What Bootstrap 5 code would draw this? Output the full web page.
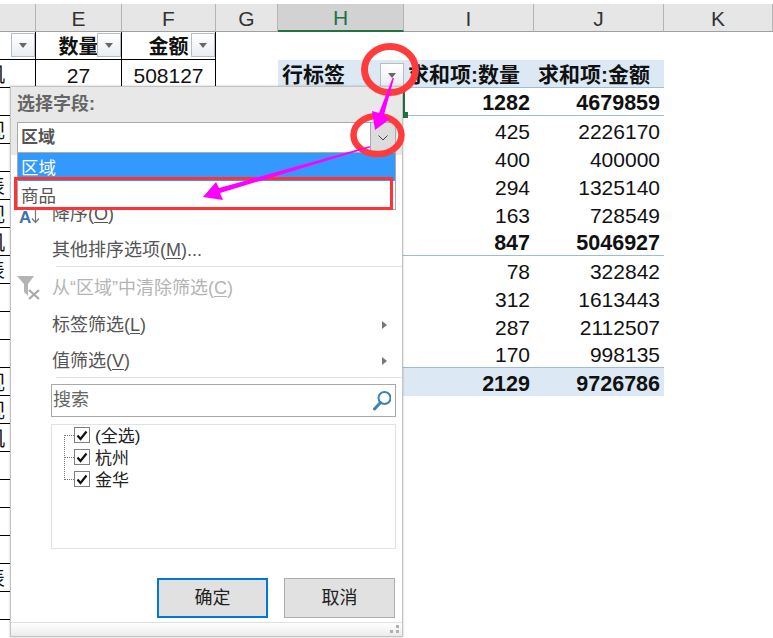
<!doctype html>
<html lang="zh">
<head>
<meta charset="utf-8">
<title>数据透视表筛选</title>
<link href="https://cdn.jsdelivr.net/npm/bootstrap@5.3.0/dist/css/bootstrap.min.css" rel="stylesheet">
<style>
html,body{height:100%;overflow:hidden;background:#fff}
body{font-family:"Liberation Sans","Noto Sans CJK SC",sans-serif;color:#111}
.stage{height:638px;width:773px}
.sheet{table-layout:fixed;width:773px;border-collapse:separate;border-spacing:0}
.sheet th,.sheet td{padding:0;height:28px;font-size:21px;line-height:24px;font-weight:400;white-space:nowrap;overflow:visible}
.sheet thead th{height:28px;padding-top:3px;background:#e6e6e6;border-right:1px solid #b4b4b4;border-bottom:1px solid #a0a0a0;text-align:center;font-size:21px;color:#333}
.sheet thead th.cur{padding-top:2px;background:#d2d2d2;color:#217346;border-bottom:2px solid #217346}
.sheet tbody tr>td:nth-child(-n+3){border-bottom:1px solid #000;border-right:1px solid #000}
.sheet td.num{text-align:right;padding-right:4px;padding-top:3px}
.sheet td.tot{font-weight:700;font-size:21.5px;padding-top:4px;line-height:23px}
.pline td:nth-child(n+5):nth-child(-n+7){border-bottom:1px solid #9dbcdc}
.pband td:nth-child(n+5):nth-child(-n+7){background:#dce9f5}
.sheet td.cap{font-weight:700;font-size:20px;text-align:center;position:relative;padding-top:2px}
.sheet td.lbl{font-weight:700;padding-top:3px}
.sheet td.clip{text-indent:-15px;padding-top:3px;overflow:hidden;font-size:20px}
.sheet td.rcell{padding-top:4px;line-height:23px;text-align:center}
.fbtn{width:24px;height:24px;flex:none;border:1px solid #b5bcc4;background:linear-gradient(#fff,#e9edf2);display:flex;align-items:center;justify-content:center}
.fbtn::after{content:"";border-left:4px solid transparent;border-right:4px solid transparent;border-top:5px solid #666}
.cap .fbtn{position:absolute;right:0;top:1px}
.edge{position:relative;box-shadow:inset 1px 0 #217346,-1px 0 #217346}
.edge-dot{position:absolute;left:-1px;bottom:-3px;width:5px;height:6px;background:#217346}
.xldlg{position:absolute;left:10px;top:86px;width:393px;height:551px;background:#fff;border:1px solid #c4c4c4;box-shadow:0 0 2px rgba(0,0,0,.25);z-index:5;font-size:18px;color:#555;font-family:"Liberation Sans","Noto Sans CJK SC",sans-serif}
.dhead{background:#e8e8e8;height:68px;padding:0 6px;flex:none}
.dlabel{height:35px;line-height:35px;font-weight:700;font-size:18px;color:#666}
.pick{height:31px;background:#fff;border:1px solid #aaa;font-weight:700;font-size:17px;padding-left:3px;line-height:29px}
.pickbtn{width:25px;background:#dcdcdc;border-left:1px solid #aaa}
.drop{position:absolute;left:6px;top:65px;width:379px;height:58px;border:1px solid #aaa;border-radius:0;background:#fff}
.drop .list-group-item{height:28px;line-height:30px;padding:0 3px;border:0;border-radius:0;font-size:17.5px;color:#555;background:#fff}
.drop .list-group-item.active{background:#39f;color:#fff}
.mlist{padding-top:3px}
.mi{height:36px;padding-top:4px;line-height:32px;white-space:nowrap}
.mi-gap{margin-top:1px;margin-bottom:1px}
.mslot{width:41px;flex:none;display:flex;justify-content:flex-start;align-items:center;padding-left:6px}
.mi u{text-underline-offset:2px}
.off{color:#b4b4b4}
.azglyph{color:#3f74ad;font-weight:700;font-size:17px;line-height:17px;margin-left:2px;margin-top:7px}
.azarrow{margin-top:4px}
.subtri{margin-left:auto;margin-right:15px;border-top:4px solid transparent;border-bottom:4px solid transparent;border-left:5px solid #777}
.msep{height:1px;background:#e2e2e2;margin-left:45px}
.srch{margin:6px 6px 0 40px;height:33px;border:1px solid #a9a9a9;flex:none}
.srch .form-control{border:0;border-radius:0;padding:0 1px;height:100%;font-size:18px;background:transparent;box-shadow:none}
.srch .form-control::placeholder{color:#666;opacity:1}
.treebox{margin:7px 6px 0 40px;height:125px;border:1px solid #e2e2e2;padding:0 0 0 12px;position:relative;flex:none;color:#222;font-size:17px}
.treebox::before{content:"";position:absolute;left:12px;top:10px;height:45px;border-left:1px dotted #777}
.tnode{height:22px;line-height:22px}
.tnode:first-child{margin-top:-1px}
.tlabel{padding-top:4px}
.twig{width:10px;border-top:1px dotted #777;flex:none}
.tick{width:16px;height:16px;border:1px solid #808080;background:#fff;flex:none;margin-right:5px;display:flex;align-items:center;justify-content:center}
.dacts{margin-top:29px;padding-right:7px;gap:16px;flex:none}
.xlbtn{width:111px;height:40px;padding:0;border-radius:0;background:#e1e1e1;border:1px solid #adadad;color:#222;font-size:18px}
.xlbtn.prim{border:2px solid #0078d7}
.dfoot{margin-top:auto;height:14px;border-top:1px solid #e0e0e0;background:linear-gradient(#fff,#ebebeb);flex:none;justify-content:flex-end;padding-right:3px}
.marks{position:absolute;left:0;top:0;z-index:10;pointer-events:none}
</style>
</head>
<body>
<div class="stage position-relative pt-1">
  <table class="sheet">
    <colgroup><col style="width:36px"><col style="width:86px"><col style="width:94px"><col style="width:62px"><col style="width:126px"><col style="width:130px"><col style="width:130px"><col style="width:109px"></colgroup>
    <thead><tr><th></th><th>E</th><th>F</th><th>G</th><th class="cur">H</th><th>I</th><th>J</th><th>K</th></tr></thead>
    <tbody>
      <tr><td class="cap"><span class="fbtn"></span></td><td class="cap">数量<span class="fbtn"></span></td><td class="cap">金额<span class="fbtn"></span></td><td></td><td></td><td></td><td></td><td></td></tr>
      <tr class="pband pline"><td class="clip">机</td><td class="rcell">27</td><td class="rcell">508127</td><td></td><td class="lbl"><div class="d-flex align-items-center ps-1"><span class="flex-grow-1 text-start">行标签</span><span class="fbtn"></span></div></td><td class="lbl text-start ps-1">求和项:数量</td><td class="lbl text-start ps-1">求和项:金额</td><td></td></tr>
      <tr class="pline"><td></td><td></td><td></td><td></td><td></td><td class="num tot edge">1282<span class="edge-dot"></span></td><td class="num tot">4679859</td><td></td></tr>
      <tr><td class="clip">视</td><td></td><td></td><td></td><td></td><td class="num">425</td><td class="num">2226170</td><td></td></tr>
      <tr><td></td><td></td><td></td><td></td><td></td><td class="num">400</td><td class="num">400000</td><td></td></tr>
      <tr><td class="clip">表</td><td></td><td></td><td></td><td></td><td class="num">294</td><td class="num">1325140</td><td></td></tr>
      <tr><td class="clip">视</td><td></td><td></td><td></td><td></td><td class="num">163</td><td class="num">728549</td><td></td></tr>
      <tr class="pline"><td class="clip">机</td><td></td><td></td><td></td><td></td><td class="num tot">847</td><td class="num tot">5046927</td><td></td></tr>
      <tr><td class="clip">表</td><td></td><td></td><td></td><td></td><td class="num">78</td><td class="num">322842</td><td></td></tr>
      <tr><td></td><td></td><td></td><td></td><td></td><td class="num">312</td><td class="num">1613443</td><td></td></tr>
      <tr><td></td><td></td><td></td><td></td><td></td><td class="num">287</td><td class="num">2112507</td><td></td></tr>
      <tr class="pline"><td></td><td></td><td></td><td></td><td></td><td class="num">170</td><td class="num">998135</td><td></td></tr>
      <tr class="pband"><td class="clip">视</td><td></td><td></td><td></td><td></td><td class="num tot">2129</td><td class="num tot">9726786</td><td></td></tr>
      <tr><td class="clip">视</td><td></td><td></td><td></td><td></td><td></td><td></td><td></td></tr>
      <tr><td class="clip">机</td><td></td><td></td><td></td><td></td><td></td><td></td><td></td></tr>
      <tr><td></td><td></td><td></td><td></td><td></td><td></td><td></td><td></td></tr>
      <tr><td></td><td></td><td></td><td></td><td></td><td></td><td></td><td></td></tr>
      <tr><td></td><td></td><td></td><td></td><td></td><td></td><td></td><td></td></tr>
      <tr><td></td><td></td><td></td><td></td><td></td><td></td><td></td><td></td></tr>
      <tr><td class="clip">表</td><td></td><td></td><td></td><td></td><td></td><td></td><td></td></tr>
      <tr><td></td><td></td><td></td><td></td><td></td><td></td><td></td><td></td></tr>
    </tbody>
  </table>

  <div class="xldlg d-flex flex-column">
    <div class="dhead">
      <div class="dlabel">选择字段:</div>
      <div class="pick d-flex justify-content-between">
        <span>区域</span>
        <span class="pickbtn d-flex align-items-center justify-content-center">
          <svg width="12" height="8" viewBox="0 0 12 8"><path d="M1.500 1.500 6 6l4.500-4.500" fill="none" stroke="#444" stroke-width="1"/></svg>
        </span>
      </div>
    </div>
    <div class="drop list-group">
      <div class="list-group-item active">区域</div>
      <div class="list-group-item">商品</div>
    </div>
    <div class="mlist flex-none">
      <div class="mi d-flex"><span class="mslot"></span>升序(<u>S</u>)</div>
      <div class="mi d-flex"><span class="mslot"><span class="azglyph">A</span><svg class="azarrow" width="9" height="16" viewBox="0 0 9 16"><path d="M4.500 1v13M1 10.500l3.500 4 3.500-4" fill="none" stroke="#777" stroke-width="1.200"/></svg></span>降序(<u>O</u>)</div>
      <div class="mi d-flex"><span class="mslot"></span>其他排序选项(<u>M</u>)...</div>
      <div class="msep"></div>
      <div class="mi mi-gap d-flex off"><span class="mslot"><svg width="24" height="25" viewBox="0 0 24 25"><path d="M0 0h17l-6 8v12l-4-4V8z" fill="#b4b4b4"/><path d="M12 14l10 9M22 14l-10 9" stroke="#a8a8a8" stroke-width="2.200"/></svg></span>从“区域”中清除筛选(<u>C</u>)</div>
      <div class="mi d-flex align-items-center"><span class="mslot"></span>标签筛选(<u>L</u>)<span class="subtri"></span></div>
      <div class="mi d-flex align-items-center"><span class="mslot"></span>值筛选(<u>V</u>)<span class="subtri"></span></div>
      <div class="msep"></div>
    </div>
    <div class="srch d-flex align-items-center">
      <input class="form-control" type="text" placeholder="搜索" aria-label="搜索">
      <svg class="flex-shrink-0 me-1" width="19" height="20" viewBox="0 0 19 20"><circle cx="12.500" cy="7" r="6" fill="none" stroke="#3f7fb8" stroke-width="2"/><path d="M8.500 11.500 2.500 18" stroke="#3f7fb8" stroke-width="3" stroke-linecap="round"/></svg>
    </div>
    <div class="treebox">
      <div class="tnode d-flex align-items-center"><span class="twig"></span><span class="tick"><svg width="12" height="11" viewBox="0 0 12 11"><path d="M1.500 5.500 4.500 9 10.500 1.500" fill="none" stroke="#111" stroke-width="2.200"/></svg></span><span class="tlabel">(全选)</span></div>
      <div class="tnode d-flex align-items-center"><span class="twig"></span><span class="tick"><svg width="12" height="11" viewBox="0 0 12 11"><path d="M1.500 5.500 4.500 9 10.500 1.500" fill="none" stroke="#111" stroke-width="2.200"/></svg></span><span class="tlabel">杭州</span></div>
      <div class="tnode d-flex align-items-center"><span class="twig"></span><span class="tick"><svg width="12" height="11" viewBox="0 0 12 11"><path d="M1.500 5.500 4.500 9 10.500 1.500" fill="none" stroke="#111" stroke-width="2.200"/></svg></span><span class="tlabel">金华</span></div>
    </div>
    <div class="dacts d-flex justify-content-end">
      <button type="button" class="btn xlbtn prim">确定</button>
      <button type="button" class="btn xlbtn">取消</button>
    </div>
    <div class="dfoot d-flex align-items-center">
      <svg width="10" height="10" viewBox="0 0 10 10"><path d="M7 0h3v3H7zM1 5h3v3H1zM7 5h3v3H7z" fill="#b0b0b0"/></svg>
    </div>
  </div>

  <svg class="marks" width="773" height="638" viewBox="0 0 773 638" aria-hidden="true">
    <ellipse cx="390" cy="69.500" rx="25.500" ry="23" fill="none" stroke="#ff3c3c" stroke-width="7"/>
    <ellipse cx="377.500" cy="135" rx="24" ry="19" fill="none" stroke="#ff3c3c" stroke-width="6.500"/>
    <rect x="15.500" y="178.500" width="376" height="30" fill="none" stroke="#f33" stroke-width="3"/>
    <path d="M394 78 392.500 78 379 113 372 111 375 130 390 119 384 115z" fill="#f0f"/>
    <path d="M370 146 219 188 216 182 203 197 223 200 220 193 370 147.500z" fill="#f0f"/>
  </svg>
</div>
</body>
</html>
